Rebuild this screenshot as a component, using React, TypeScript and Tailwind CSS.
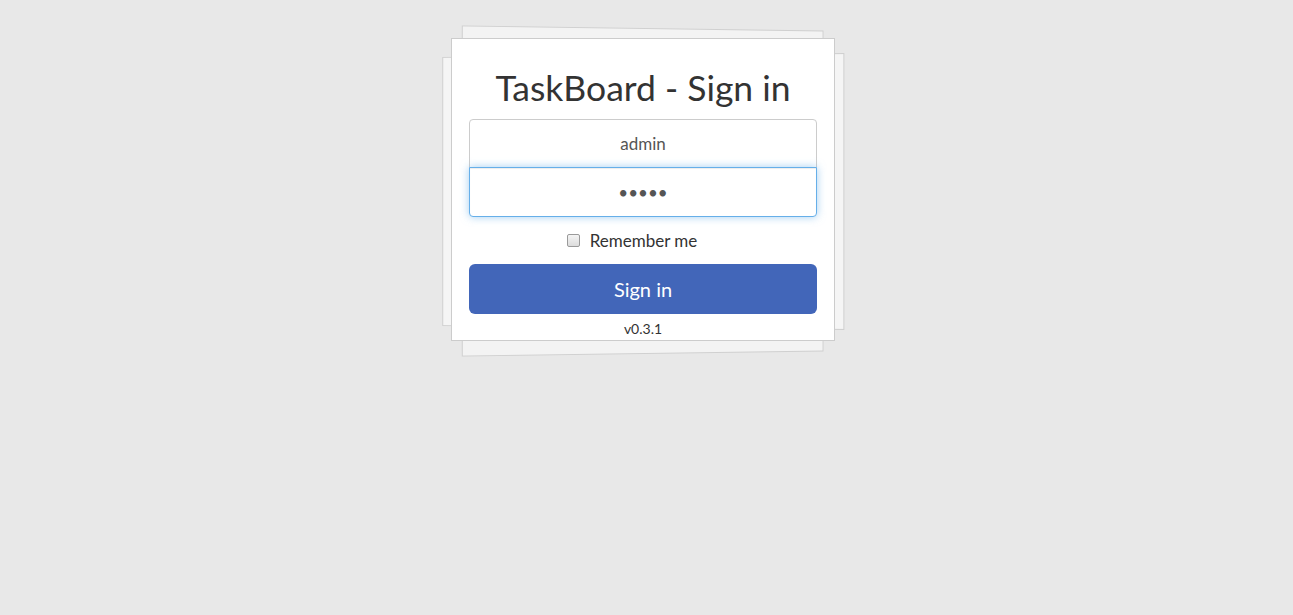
import React from 'react';

const App: React.FC = () => {
  return (
    <div className="min-h-[615px] w-full bg-[#e8e8e8] font-['Lato','Open_Sans',sans-serif] text-[#333]">
      <div className="flex justify-center pr-[7px] pt-[38px]">
        <div className="relative w-[384px]">
          {/* Stacked papers behind the card */}
          <div className="absolute top-[-10px] bottom-[-13px] left-[13px] right-[8px] border border-[#d0d0d0] bg-[#f3f3f3] [transform:perspective(1000px)_rotateY(5deg)]" />
          <div className="absolute top-[17px] bottom-[13px] left-[-12px] right-[-7px] border border-[#d0d0d0] bg-[#f5f5f5] [transform:perspective(1000px)_rotateY(-4deg)]" />

          {/* Card */}
          <div className="relative border border-[#cccccc] bg-white px-[17px]">
            <h2 className="pt-[28px] pb-[10px] text-center text-[35.5px] leading-[42px] font-normal text-[#333]">
              TaskBoard - Sign in
            </h2>

            <div className="flex flex-col">
              <input
                type="text"
                defaultValue="admin"
                className="h-[49px] w-full rounded-t-[4px] border border-[#cccccc] bg-white text-center text-[17px] text-[#555] outline-none"
              />
              <input
                type="password"
                defaultValue="admin"
                className="relative mt-[-1px] h-[50px] w-full rounded-b-[4px] border border-[#66afe9] bg-white text-center text-[17px] text-[#555] outline-none shadow-[inset_0_1px_1px_rgba(0,0,0,0.075),0_0_8px_rgba(102,175,233,0.6)]"
              />
            </div>

            <div className="flex h-[47px] items-center justify-center gap-[10px] pr-[22px]">
              <span className="h-[13px] w-[13px] rounded-[2px] border border-[#9a9a9a] bg-gradient-to-b from-[#f4f4f4] to-[#dcdcdc]" />
              <span className="text-[17px] text-[#333]">Remember me</span>
            </div>

            <button className="h-[50px] w-full rounded-[6px] bg-[#4266b9] text-[20px] text-white">
              Sign in
            </button>

            <div className="h-[26px] pt-[5px] text-center text-[14px] leading-[20px] text-[#333]">
              v0.3.1
            </div>
          </div>
        </div>
      </div>
    </div>
  );
};

export default App;
